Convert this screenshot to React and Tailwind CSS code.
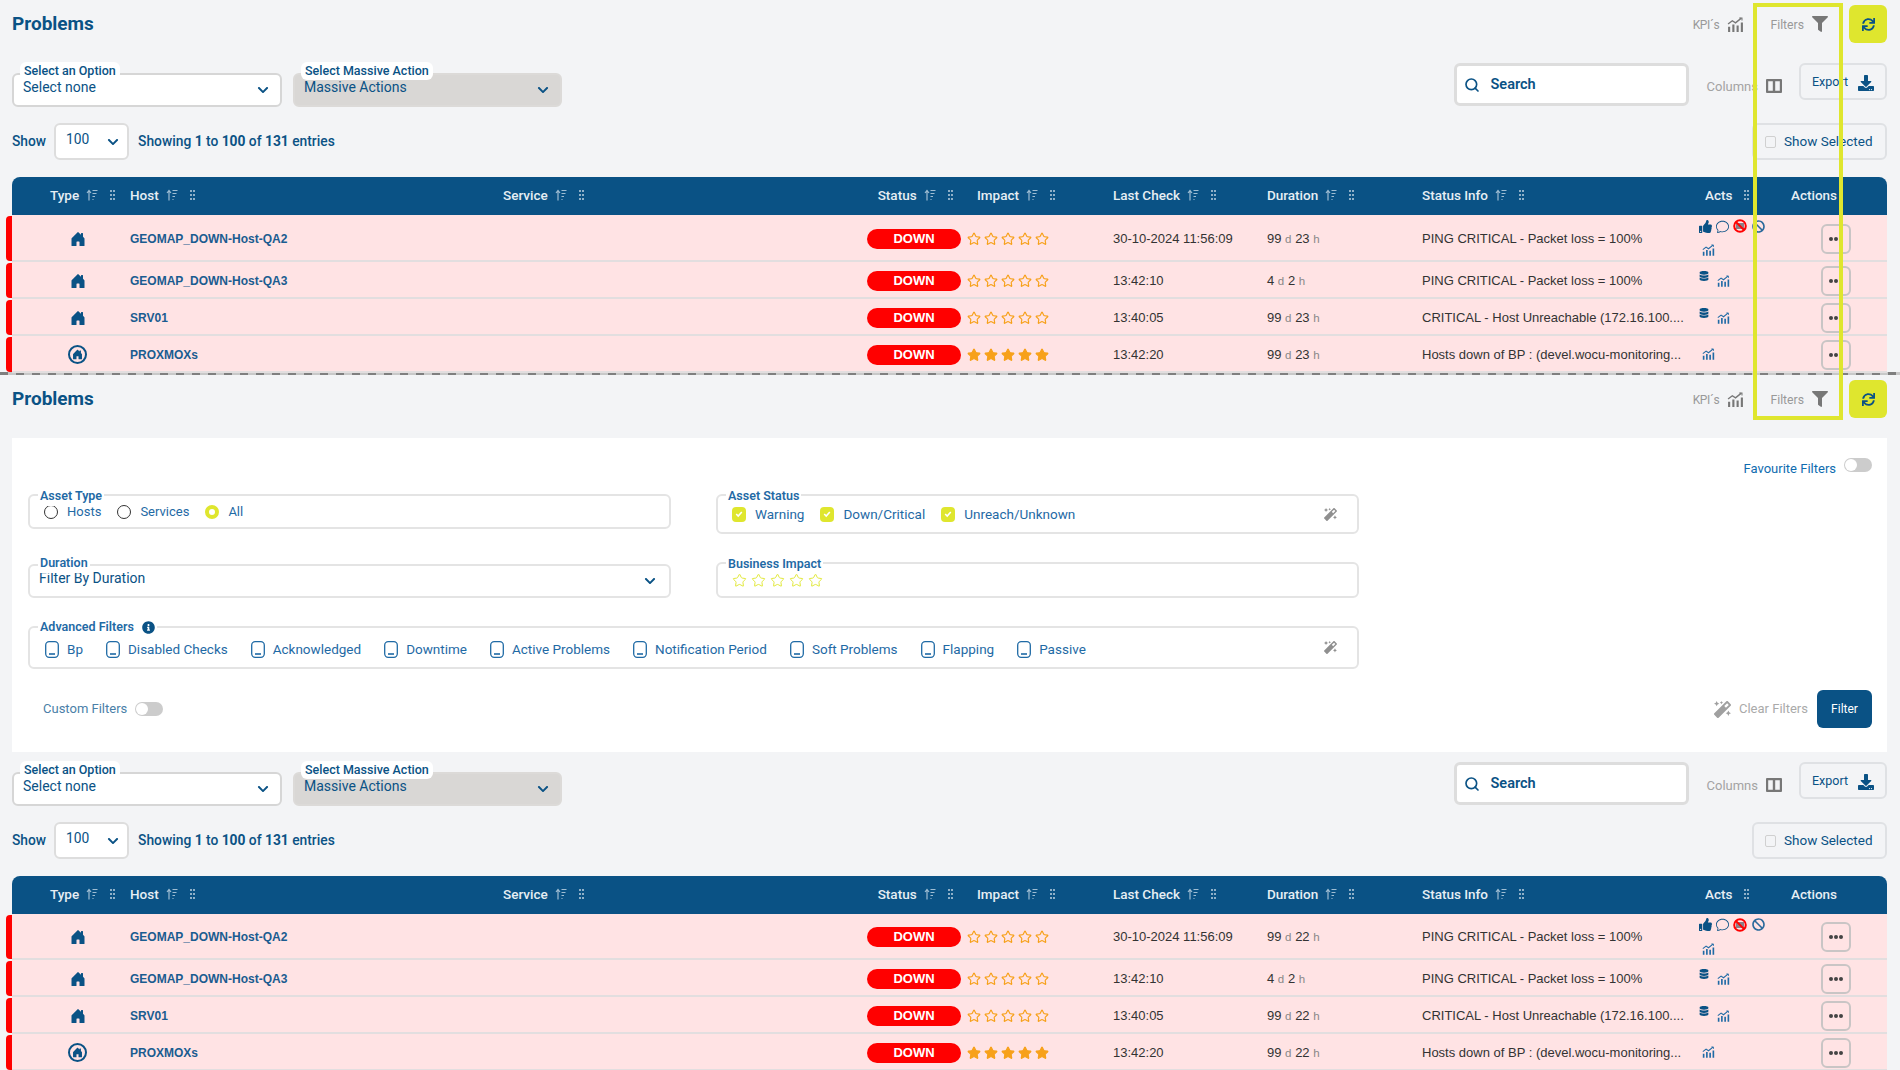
import { Search, Star } from "lucide-react";
import {
  FaBan,
  FaChevronDown,
  FaDatabase,
  FaDownload,
  FaFilter,
  FaInfoCircle,
  FaMagic,
  FaSync,
  FaThumbsUp,
} from "react-icons/fa";
import { BsChat, BsHouseDoorFill } from "react-icons/bs";

const COLS_HEAD =
  "grid grid-cols-[118px_373px_374.7px_99.3px_136px_154px_155px_283px_86px_1fr]";
const COLS_ROW =
  "grid grid-cols-[118px_373px_364px_100px_146px_154px_155px_277px_122px_1fr]";

function ChartIcon({ className }) {
  return (
    <svg viewBox="0 0 16 14" className={className} fill="none" stroke="currentColor">
      <path d="M1 6.5 5 3.5 8 5.5 13.5 1" strokeWidth="1.3" />
      <path d="M11.5 0.8h2.6v2.4" strokeWidth="1" />
      <path d="M2 9v5M6 7v7M10 8v6M14 5v9" strokeWidth="2" />
    </svg>
  );
}

function SortIcon() {
  return (
    <svg viewBox="0 0 12 12" className="w-3 h-3 ml-[7px] text-[#9fbdd3]" fill="none" stroke="currentColor">
      <path d="M3 11.5V2M1 4l2-2.5L5 4" strokeWidth="1.2" />
      <path d="M6.5 1.5h5M6.5 4.5h4M6.5 7.5h2.5M6.5 10.5h1" strokeWidth="1.2" />
    </svg>
  );
}

function GripIcon() {
  return (
    <svg viewBox="0 0 5 10" className="w-[5px] h-[10px] ml-3 text-[#8fb0c8]" fill="currentColor">
      <rect x="0" y="0" width="2" height="2" />
      <rect x="3" y="0" width="2" height="2" />
      <rect x="0" y="4" width="2" height="2" />
      <rect x="3" y="4" width="2" height="2" />
      <rect x="0" y="8" width="2" height="2" />
      <rect x="3" y="8" width="2" height="2" />
    </svg>
  );
}

function NoNotifyIcon() {
  return (
    <svg viewBox="0 0 14 14" className="w-[14px] h-[14px]" fill="none">
      <rect x="3" y="4" width="8" height="6" fill="#8a7f86" />
      <circle cx="7" cy="7" r="5.8" stroke="#ff0000" strokeWidth="2" />
      <path d="M3 3l8 8" stroke="#ff0000" strokeWidth="1.8" />
    </svg>
  );
}

function BoxCheck() {
  return (
    <svg viewBox="0 0 14 17" className="w-[14px] h-[17px] text-[#1f6aa5]" fill="none" stroke="currentColor">
      <rect x="0.7" y="0.7" width="12.6" height="15.6" rx="3.5" strokeWidth="1.3" />
      <path d="M4 13h6" strokeWidth="1.6" />
    </svg>
  );
}

function Toggle() {
  return (
    <div className="w-[28px] h-[14px] rounded-full bg-[#cccccc] flex items-center pl-[1px]">
      <div className="w-3 h-3 rounded-full bg-white" />
    </div>
  );
}

function TopBar() {
  return (
    <div className="flex items-center justify-between h-[38px] pl-3 pr-[13px]">
      <h1 className="text-[19px] font-bold text-[#0a5285]">Problems</h1>
      <div className="flex items-center text-[12px] text-[#999999]">
        <span className="mt-[2px] tracking-[-0.3px]">KPI´s</span>
        <ChartIcon className="w-[17px] h-[15px] ml-2 text-[#777777]" />
        <span className="ml-[26px] mt-[2px] text-[12.2px]">Filters</span>
        <FaFilter className="ml-2 text-[#777777]" size={16} />
        <button className="ml-[21px] w-[38px] h-[38px] rounded-md bg-[#dfe62e] flex items-center justify-center text-[#0a5285]">
          <FaSync size={13} />
        </button>
      </div>
    </div>
  );
}

function SelectBox({ label, value, disabled }) {
  return (
    <div
      className={
        disabled
          ? "relative w-[269px] h-[34px] rounded-md border-2 border-[#dcdad8] bg-[#d9d7d5] flex items-center justify-between pl-[9px] pr-[11px]"
          : "relative w-[270px] h-[34px] rounded-md border-2 border-[#d6d6d6] bg-white flex items-center justify-between pl-[9px] pr-[11px]"
      }
    >
      <span className="absolute -top-[13px] left-[6px] px-1 h-[18px] rounded-md bg-white text-[12.5px] leading-[18px] font-medium text-[#0a5285]">
        {label}
      </span>
      <span className="text-[14px] text-[#0a5285] -mt-[6px]">{value}</span>
      <FaChevronDown size={12} className="text-[#0a5285]" />
    </div>
  );
}

function Toolbar() {
  return (
    <div className="flex justify-between h-[44px] pl-3 pr-[13px]">
      <div className="flex gap-[11px] mt-[10px]">
        <SelectBox label="Select an Option" value="Select none" />
        <SelectBox label="Select Massive Action" value="Massive Actions" disabled />
      </div>
      <div className="flex items-start">
        <div className="w-[235px] h-[43px] rounded-md border-[3px] border-[#dddddd] bg-white flex items-center pl-[7px] gap-[11px] text-[#0a5285]">
          <Search size={16} strokeWidth={2.5} />
          <span className="text-[14.5px] font-semibold">Search</span>
        </div>
        <span className="ml-[18px] mt-[14px] text-[13px] text-[#a3a3a3]">Columns</span>
        <svg viewBox="0 0 16 14" className="w-4 h-[14px] ml-2 mt-[16px] text-[#777777]" fill="none" stroke="currentColor">
          <rect x="1" y="1" width="14" height="12" rx="1" strokeWidth="2.4" />
          <path d="M8 1v12" strokeWidth="2.4" />
        </svg>
        <button className="ml-[17px] w-[88px] h-[37px] rounded-md border-2 border-[#dfe1e4] flex items-center pl-[11px] pt-[2px] gap-[10px] text-[#0a5285]">
          <span className="text-[12.5px]">Export</span>
          <FaDownload size={16} />
        </button>
      </div>
    </div>
  );
}

function ShowRow() {
  return (
    <div className="flex justify-between items-center h-[37px] pl-3 pr-[13px] text-[13.8px] text-[#0a5285]">
      <div className="flex items-center">
        <span className="font-medium">Show</span>
        <div className="ml-2 w-[75px] h-[37px] rounded-md border-2 border-[#dddddd] bg-white flex items-center justify-between pl-[10px] pr-[8px]">
          <span className="-mt-[4px]">100</span>
          <FaChevronDown size={12} />
        </div>
        <span className="ml-[9px] font-medium">
          Showing <b>1</b> to <b>100</b> of <b>131</b> entries
        </span>
      </div>
      <div className="w-[135px] h-[37px] rounded-md border-2 border-[#dfe1e4] flex items-center pl-[11px] gap-[8px]">
        <div className="w-[11px] h-[12px] rounded-[2px] border border-[#d0d0d0]" />
        <span className="text-[13.5px]">Show Selected</span>
      </div>
    </div>
  );
}

function HeadCell({ label, sort = true, pad }) {
  return (
    <div className={`flex items-center ${pad || ""}`}>
      <span className="text-[13.5px] font-medium">{label}</span>
      {sort && <SortIcon />}
      {label !== "Actions" && <GripIcon />}
    </div>
  );
}

function OrangeStars({ filled }) {
  return (
    <div className="flex gap-[3px] text-[#f7a11a]">
      {[0, 1, 2, 3, 4].map((i) => (
        <Star key={i} size={14} strokeWidth={2} fill={filled ? "currentColor" : "none"} />
      ))}
    </div>
  );
}

function Acts({ kind }) {
  if (kind === "full") {
    return (
      <div className="flex flex-col gap-[11px] text-[#0a5285] -mt-[2px]">
        <div className="flex items-center gap-[4px]">
          <FaThumbsUp size={13} />
          <BsChat size={13} />
          <NoNotifyIcon />
          <FaBan size={13} className="text-[#2b6a9c] ml-[1px]" />
        </div>
        <ChartIcon className="w-[13px] h-[12px] ml-[3px] text-[#1f6aa5]" />
      </div>
    );
  }
  if (kind === "db") {
    return (
      <div className="flex items-start gap-[8px] text-[#0a5285] -mt-[1px]">
        <FaDatabase size={10} className="-mt-[3px]" />
        <ChartIcon className="w-[13px] h-[12px] mt-[1px] text-[#1f6aa5]" />
      </div>
    );
  }
  return <ChartIcon className="w-[13px] h-[12px] ml-[3px] -mt-[2px] text-[#1f6aa5]" />;
}

function Row({ host, circle, impact, last, dur, info, acts, height }) {
  return (
    <div className={`flex ${height}`}>
      <div className="w-[6px] my-[1px] rounded-l-[4px] bg-[#ff0000]" />
      <div className={`flex-1 ${COLS_ROW} items-center pt-[2px] bg-[#ffe3e4] border-b-2 border-[#e2dedf] font-['Liberation_Sans',Arial,sans-serif] text-[13px] text-[#333333]`}>
        <div className="flex justify-center pl-[13px] text-[#0a5285]">
          {circle ? (
            <div className="w-[19px] h-[19px] rounded-full border-2 border-[#0a5285] flex items-center justify-center">
              <BsHouseDoorFill size={11} />
            </div>
          ) : (
            <BsHouseDoorFill size={16} />
          )}
        </div>
        <div className="font-bold text-[12px] text-[#1a5c90]">{host}</div>
        <div />
        <div className="w-[94px] h-[20px] rounded-full bg-[#ff0000] flex items-center justify-center text-white font-bold">
          DOWN
        </div>
        <OrangeStars filled={impact} />
        <div>{last}</div>
        <div>
          {dur[0]} <span className="text-[11.5px] text-[#888888]">d</span> {dur[1]}{" "}
          <span className="text-[11.5px] text-[#888888]">h</span>
        </div>
        <div className="whitespace-nowrap">{info}</div>
        <Acts kind={acts} />
        <button className="w-[30px] h-[30px] rounded-md border-2 border-[#c9c5c5] flex items-center justify-center gap-[1px]">
          <i className="w-[4px] h-[4px] rounded-full bg-[#444444]" />
          <i className="w-[4px] h-[4px] rounded-full bg-[#444444]" />
          <i className="w-[4px] h-[4px] rounded-full bg-[#444444]" />
        </button>
      </div>
    </div>
  );
}

function ProblemsTable({ hours, firstRow }) {
  return (
    <div className="pl-[6px] pr-[13px]">
      <div className={`ml-[6px] h-[38px] pb-[2px] rounded-t-lg bg-[#0a5285] text-[#e6eef4] ${COLS_HEAD} items-center`}>
        <HeadCell label="Type" pad="pl-[38px]" />
        <HeadCell label="Host" />
        <HeadCell label="Service" />
        <HeadCell label="Status" />
        <HeadCell label="Impact" />
        <HeadCell label="Last Check" />
        <HeadCell label="Duration" />
        <HeadCell label="Status Info" />
        <HeadCell label="Acts" sort={false} />
        <HeadCell label="Actions" sort={false} />
      </div>
      <Row
        height={firstRow}
        host="GEOMAP_DOWN-Host-QA2"
        last="30-10-2024 11:56:09"
        dur={["99", hours]}
        info="PING CRITICAL - Packet loss = 100%"
        acts="full"
      />
      <Row
        height="h-[37px]"
        host="GEOMAP_DOWN-Host-QA3"
        last="13:42:10"
        dur={["4", "2"]}
        info="PING CRITICAL - Packet loss = 100%"
        acts="db"
      />
      <Row
        height="h-[37px]"
        host="SRV01"
        last="13:40:05"
        dur={["99", hours]}
        info="CRITICAL - Host Unreachable (172.16.100...."
        acts="db"
      />
      <Row
        height="h-[37px]"
        host="PROXMOXs"
        circle
        impact
        last="13:42:20"
        dur={["99", hours]}
        info="Hosts down of BP : (devel.wocu-monitoring..."
        acts="chart"
      />
    </div>
  );
}

function Field({ label, legendTop, className, children }) {
  return (
    <div className={`relative rounded-md border-2 border-[#e4e4e4] bg-white ${className}`}>
      <span className={`absolute ${legendTop} left-[8px] px-[2px] bg-white text-[12.5px] font-semibold text-[#1f6aa5] flex items-center gap-[8px]`}>
        {label}
      </span>
      {children}
    </div>
  );
}

function Radio({ label, checked }) {
  return (
    <div className="flex items-center gap-[9px]">
      <div
        className={
          checked
            ? "w-[14px] h-[14px] rounded-full border-4 border-[#dfe62e] bg-white"
            : "w-[14px] h-[14px] rounded-full border-[1.5px] border-[#333333]"
        }
      />
      <span>{label}</span>
    </div>
  );
}

function YellowCheck({ label }) {
  return (
    <div className="flex items-center gap-[9px]">
      <div className="w-[14px] h-[15px] rounded-[4px] bg-[#dfe62e] flex items-center justify-center">
        <svg viewBox="0 0 10 10" className="w-2 h-2" fill="none" stroke="white" strokeWidth="2">
          <path d="M1.5 5l2.5 2.5 4.5-5" />
        </svg>
      </div>
      <span>{label}</span>
    </div>
  );
}

function BoxItem({ label }) {
  return (
    <div className="flex items-center gap-[8px]">
      <BoxCheck />
      <span>{label}</span>
    </div>
  );
}

function FilterPanel() {
  return (
    <div className="ml-3 mr-[13px] mt-5 h-[314px] bg-white pl-4 pr-[15px] pt-5 text-[13px] text-[#1f6aa5]">
      <div className="flex justify-end items-center gap-2 h-[14px]">
        <span className="text-[13px] mt-[7px] text-[#0f6cb0]">Favourite Filters</span>
        <Toggle />
      </div>
      <div className="mt-[22px] w-[1331px] grid grid-cols-[643px_643px] gap-x-[45px]">
        <Field label="Asset Type" legendTop="-top-[9px]" className="h-[35px] flex items-center pl-[14px] gap-4">
          <Radio label="Hosts" />
          <Radio label="Services" />
          <Radio label="All" checked />
        </Field>
        <Field label="Asset Status" legendTop="-top-[9px]" className="h-[40px] flex items-center pl-[14px] pr-[20px] gap-4 text-[13.5px]">
          <YellowCheck label="Warning" />
          <YellowCheck label="Down/Critical" />
          <YellowCheck label="Unreach/Unknown" />
          <FaMagic size={13} className="ml-auto text-[#8f8f8f]" />
        </Field>
        <Field label="Duration" legendTop="-top-[12px]" className="mt-[30px] h-[34px] flex items-center justify-between pl-[9px] pr-[13px]">
          <span className="text-[14px] text-[#0a5285] -mt-[6px]">Filter By Duration</span>
          <FaChevronDown size={12} className="text-[#0a5285]" />
        </Field>
        <Field label="Business Impact" legendTop="-top-[9px]" className="mt-[28px] h-[36px] flex items-center pl-[14px] gap-[4px] text-[#dfe62e]">
          {[0, 1, 2, 3, 4].map((i) => (
            <Star key={i} size={15} strokeWidth={1.5} />
          ))}
        </Field>
        <Field
          label={
            <>
              Advanced Filters
              <FaInfoCircle size={13} className="text-[#0a5285]" />
            </>
          }
          legendTop="-top-[10px]"
          className="col-span-2 mt-[28px] h-[43px] flex items-center pl-[15px] pt-[4px] pr-[20px] gap-[23px] text-[13.5px]"
        >
          <BoxItem label="Bp" />
          <BoxItem label="Disabled Checks" />
          <BoxItem label="Acknowledged" />
          <BoxItem label="Downtime" />
          <BoxItem label="Active Problems" />
          <BoxItem label="Notification Period" />
          <BoxItem label="Soft Problems" />
          <BoxItem label="Flapping" />
          <BoxItem label="Passive" />
          <FaMagic size={13} className="ml-auto -mt-[5px] text-[#8f8f8f]" />
        </Field>
      </div>
      <div className="mt-[21px] h-[38px] flex items-center justify-between pl-[15px]">
        <div className="flex items-center gap-2 text-[#4a7fa8]">
          <span>Custom Filters</span>
          <Toggle />
        </div>
        <div className="flex items-center">
          <FaMagic size={17} className="text-[#a0a0a0]" />
          <span className="ml-2 text-[13px] text-[#aaaaaa]">Clear Filters</span>
          <button className="ml-[9px] w-[55px] h-[38px] rounded-md bg-[#0a5285] text-white text-[12px]">
            Filter
          </button>
        </div>
      </div>
    </div>
  );
}

export default function App() {
  return (
    <div className="relative w-[1900px] h-[1070px] overflow-hidden bg-[#f3f4f6] font-[Roboto,sans-serif]">
      <div className="pt-[5px]">
        <TopBar />
      </div>
      <div className="mt-[20px]">
        <Toolbar />
      </div>
      <div className="mt-4">
        <ShowRow />
      </div>
      <div className="mt-[17px]">
        <ProblemsTable hours="23" firstRow="h-[47px]" />
      </div>
      <div className="h-[3px] -mt-px bg-[repeating-linear-gradient(90deg,#7f7f7f_0_8px,#c8c8c8_8px_16px)]" />
      <div className="pt-[5px]">
        <TopBar />
      </div>
      <FilterPanel />
      <div className="mt-[10px]">
        <Toolbar />
      </div>
      <div className="mt-4">
        <ShowRow />
      </div>
      <div className="mt-[17px]">
        <ProblemsTable hours="22" firstRow="h-[46px]" />
      </div>
      {/* highlight box drawn over the page */}
      <div className="absolute left-[1753px] top-[3px] w-[90px] h-[417px] border-4 border-[#dfe62e] pointer-events-none" />
    </div>
  );
}
